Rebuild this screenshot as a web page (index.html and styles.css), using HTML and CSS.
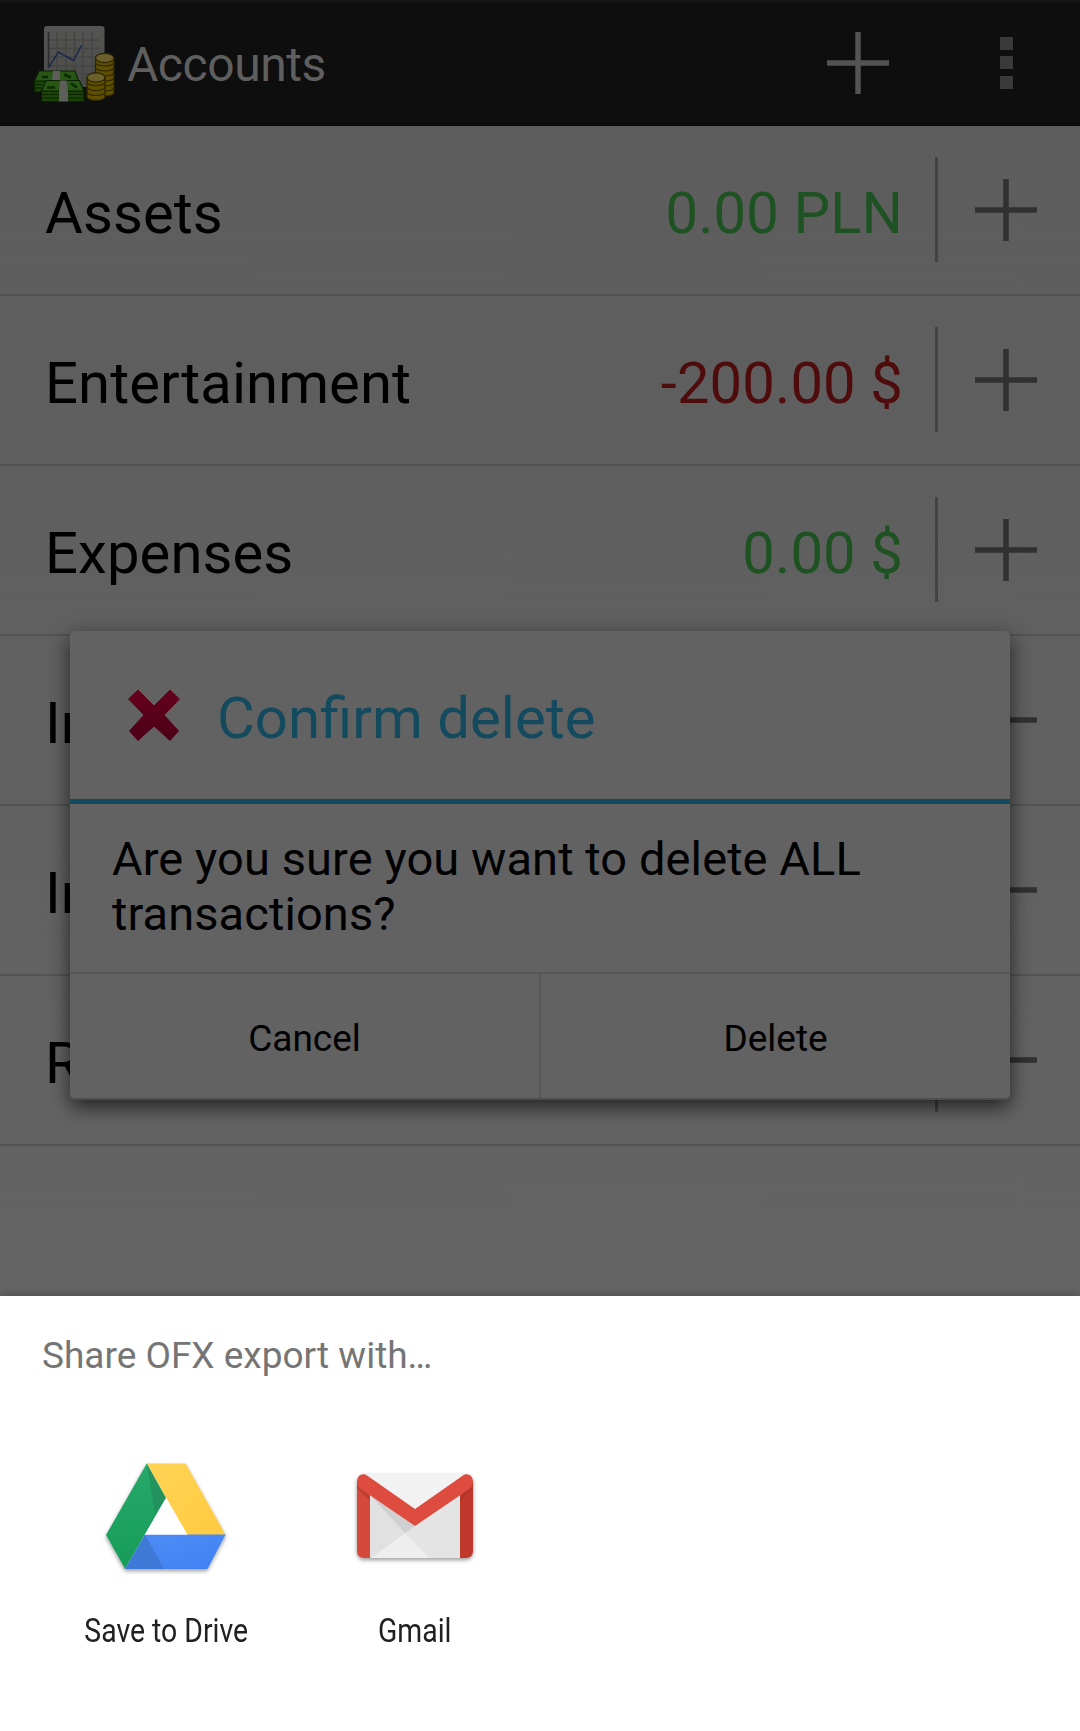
FILE: index.html
```
<!DOCTYPE html>
<html lang="en">
<head>
<meta charset="utf-8">
<title>Accounts</title>
<link rel="stylesheet" href="styles.css">
</head>
<body>
<svg width="0" height="0" class="defs">
  <defs>
    <symbol id="plus" viewBox="0 0 64 64"><path d="M32 1v62M1 32h62" stroke="currentColor" stroke-width="5.5" fill="none"/></symbol>
    <linearGradient id="cross" x1="0" y1="0" x2="0" y2="1"><stop offset="0" stop-color="#66001f"/><stop offset="1" stop-color="#4b0018"/></linearGradient>
    <linearGradient id="dg" x1="0" y1="0" x2="0" y2="1"><stop offset="0" stop-color="#28a86b"/><stop offset="1" stop-color="#159c57"/></linearGradient>
    <linearGradient id="dy" x1="0" y1="0" x2="1" y2="1"><stop offset="0" stop-color="#ffd354"/><stop offset="1" stop-color="#fecb41"/></linearGradient>
    <linearGradient id="db" x1="0" y1="0" x2="1" y2="1"><stop offset="0" stop-color="#4f8df5"/><stop offset="1" stop-color="#3f82f3"/></linearGradient>
    <linearGradient id="paper" x1="0" y1="0" x2="0" y2="1"><stop offset="0" stop-color="#545452"/><stop offset="1" stop-color="#4b4b49"/></linearGradient>
  </defs>
</svg>
<div class="screen">
  <header class="bar">
    <svg class="logo" viewBox="0 0 84 80">
      <rect x="11" y="3" width="60.500" height="61" rx="3" fill="url(#paper)"/>
      <path d="M24 9v50M33 9v50M41.500 9v50M50 9v50M59 9v50M16 17h50M16 25.500h50M16 34h50M16 43h50M16 51h50" stroke="#454544" stroke-width="1.500"/>
      <path d="M15.500 9v36" stroke="#2b2b2b" stroke-width="1.500"/>
      <path d="M16 44L25.500 29l15 8.500 8-15" fill="none" stroke="#15294b" stroke-width="1.500"/>
      <g stroke="#2c2300" stroke-width="1.200">
        <path d="M62.500 35v35c3 4 16 4 18.500 0V35z" fill="#5f4f00"/>
        <path d="M62.500 40c3 4 16 4 18.500 0M62.500 45c3 4 16 4 18.500 0M62.500 50c3 4 16 4 18.500 0M62.500 55c3 4 16 4 18.500 0M62.500 60c3 4 16 4 18.500 0M62.500 65c3 4 16 4 18.500 0" fill="none"/>
        <ellipse cx="71.700" cy="35" rx="9.200" ry="4.700" fill="#6b602c"/>
        <path d="M54 54.500v20c3 4 15 4 18 0v-20z" fill="#5f4f00"/>
        <path d="M54 59.500c3 4 15 4 18 0M54 64.500c3 4 15 4 18 0M54 69.500c3 4 15 4 18 0" fill="none"/>
        <ellipse cx="63" cy="54.500" rx="9" ry="4.700" fill="#6b602c"/>
      </g>
      <g stroke="#0a2100" stroke-width="1.200">
        <path d="M1.500 58h44v11h-44z" fill="#1c4404"/><path d="M6 48h36l3.500 10h-44z" fill="#285614"/>
        <path d="M8.500 68h42.500v10.500H8.500z" fill="#1c4404"/><path d="M13 57.500h33.500L51 68H8.500z" fill="#285614"/>
        <path d="M1.500 61.500h7M1.500 65h7M8.500 71.500H51M8.500 75H51" fill="none"/>
      </g>
      <path d="M20 48h7v9h-8zM27 57.500h6.500l1.500 11v10h-9v-10z" fill="#5d5d5a"/>
      <path d="M14 64.500h8M38 60.500l6 4M9 54h6M31 51.500l7 3" stroke="#0a2b00" stroke-width="2.500"/>
    </svg>
    <h1>Accounts</h1>
    <svg class="plus light"><use href="#plus"/></svg>
    <div class="dots"><i></i><i></i><i></i></div>
  </header>
  <main>
    <div class="row"><span class="name">Assets</span><span class="amount pos">0.00 PLN</span><i class="sep"></i><svg class="plus"><use href="#plus"/></svg></div>
    <div class="row"><span class="name">Entertainment</span><span class="amount neg">-200.00 $</span><i class="sep"></i><svg class="plus"><use href="#plus"/></svg></div>
    <div class="row"><span class="name">Expenses</span><span class="amount pos">0.00 $</span><i class="sep"></i><svg class="plus"><use href="#plus"/></svg></div>
    <div class="row"><span class="name">In</span><i class="sep"></i><svg class="plus"><use href="#plus"/></svg></div>
    <div class="row"><span class="name">In</span><i class="sep"></i><svg class="plus"><use href="#plus"/></svg></div>
    <div class="row"><span class="name">R</span><i class="sep"></i><svg class="plus"><use href="#plus"/></svg></div>
  </main>
  <section class="dialog">
    <div class="dialog-head">
      <svg class="cross" viewBox="0 0 52 52"><path d="M10 1L26 17 42 1 51.500 10 36 26 50.500 42 42 51.500 26 37 10 51.500 1.500 42 16 26 .5 10z" fill="url(#cross)" stroke="url(#cross)" stroke-linejoin="round"/></svg>
      <h2>Confirm delete</h2>
    </div>
    <p>Are you sure you want to delete ALL transactions?</p>
    <div class="buttons"><button>Cancel</button><button>Delete</button></div>
  </section>
  <section class="sheet">
    <h3>Share OFX export with…</h3>
    <div class="apps">
      <div class="app">
        <svg class="icon" viewBox="0 0 144 144">
          <path d="M54.500 19h39l40 71-18.500 34H33L14 90z" class="lift" fill="#fff"/>
          <path d="M54.700 18.500h39l40 71.500H95.300z" fill="url(#dy)"/>
          <path d="M54.700 18.500L74 53 33 124 14 90z" fill="url(#dg)"/>
          <path d="M54.700 18.500L74 53 63 69z" fill="#24875a" opacity=".6"/>
          <path d="M53 89.500h80.700L115.500 124H33z" fill="url(#db)"/>
          <path d="M53 89.500L33 124h39z" fill="#3c73ca" opacity=".7"/>
          <path d="M74 53L53 89.500h42.300z" fill="#fff"/>
        </svg>
        <span>Save to Drive</span>
      </div>
      <div class="app">
        <svg class="icon" viewBox="0 0 144 144">
          <rect x="14" y="29" width="116" height="84" rx="7" class="lift" fill="#e4e4e4"/>
          <path d="M22 28.500h100L72 66z" fill="#f2f2f2"/>
          <path d="M27 51L62 88 28 113h-1z" fill="#e1e1e1"/>
          <path d="M27 50L72 81l-10 7z" fill="#d0d0d0"/>
          <path d="M28 113L62 88l24 25z" fill="#eee"/>
          <path d="M14 36h13v77h-6q-7 0-7-7z" fill="#d5483c"/>
          <path d="M130 36h-13v77h6q7 0 7-7z" fill="#c0372b"/>
          <path d="M14 40L27 51 27 56 14 43zM130 40L117 51 117 56 130 43z" fill="#a93429" opacity=".5"/>
          <path d="M14 37c0-7 6-9.500 10-6.500L72 64l48-33.500c4-3 10-.5 10 6.500 0 3-1 5-3 6.500L72 81 17 43.500c-2-1.500-3-3.500-3-6.500z" fill="#de4b3f"/>
        </svg>
        <span>Gmail</span>
      </div>
    </div>
  </section>
</div>
</body>
</html>
```
FILE: styles.css
```
* { box-sizing: border-box; margin: 0; padding: 0; }
body { font-family: Roboto, sans-serif; background: #5f5f5f; }
h1, h2, h3 { font-weight: 400; white-space: nowrap; }
.defs { position: absolute; }
.screen { position: relative; width: 1080px; height: 1731px; overflow: hidden; display: flex; flex-direction: column; background: linear-gradient(#5c5c5c, #646464 1296px); }
.bar { height: 126px; flex: none; display: flex; align-items: center; padding-left: 33px; background: #0e0e0e; border-top: 3px solid #151515; border-bottom: 4px solid #0a0a0a; }
.logo { width: 84px; height: 80px; flex: none; }
.bar h1 { font-size: 48px; letter-spacing: -.45px; color: #5f5f5f; line-height: 60px; margin: 5px 0 0 10px; flex: 1; }
.plus { width: 64px; height: 64px; flex: none; color: #313131; }
.plus.light { color: #535353; }
.dots { width: 13px; margin: 0 67px 0 110px; display: grid; gap: 6.5px; }
.dots i { height: 13px; background: #3a3a3a; }
main { flex: 1; }
.row { height: 170px; padding: 0 42px 0 45px; display: flex; align-items: center; border-bottom: 2px solid #535353; font-size: 58px; }
.name { flex: 1; color: #000; margin-top: 5px; letter-spacing: .08px; }
.amount { margin-top: 5px; margin-right: 32px; letter-spacing: .1px; }
.pos { color: #1f5222; }
.neg { color: #4f0c0c; }
.sep { width: 3px; height: 105px; background: #434343; margin: 0 36px 1px 0; }
.dialog { position: absolute; left: 70px; top: 631px; width: 940px; height: 469px; border-radius: 5px; background: #626262; border-bottom: 2px solid #4d4d4d; box-shadow: 0 7px 20px rgba(0,0,0,.65); display: flex; flex-direction: column; }
.dialog-head { height: 173px; border-bottom: 5px solid #144a5e; display: flex; align-items: center; padding-left: 58px; }
.cross { width: 52px; height: 52px; }
.dialog h2 { font-size: 58.1px; color: #144a5e; margin: 5px 0 0 37px; }
.dialog p { flex: 1; padding: 27px 42px; font-size: 47px; letter-spacing: .09px; line-height: 55px; }
.buttons { height: 126px; border-top: 2px solid #565656; display: flex; }
.buttons button { flex: 1; border: 0; background: none; font: 37px Roboto, sans-serif; color: #000; padding-top: 5px; }
.buttons button + button { border-left: 2px solid #565656; }
.sheet { height: 435px; flex: none; background: #fff; padding: 36px 41px; box-shadow: 0 -2px 8px rgba(0,0,0,.2); }
.sheet h3 { font-size: 37px; line-height: 48px; color: #757575; padding-left: 1px; }
.apps { display: flex; margin-top: 65px; }
.app { width: 249px; height: 220px; display: flex; flex-direction: column; align-items: center; }
.icon { width: 144px; height: 144px; flex: none; }
.app:first-child .icon { margin-right: 3px; }
.lift { filter: drop-shadow(0 2px 2px rgba(0,0,0,.4)); }
.app span { font-size: 33px; line-height: 40px; margin: 22px 0 0 1px; color: #212121; white-space: nowrap; transform: scaleX(.86); }
```
